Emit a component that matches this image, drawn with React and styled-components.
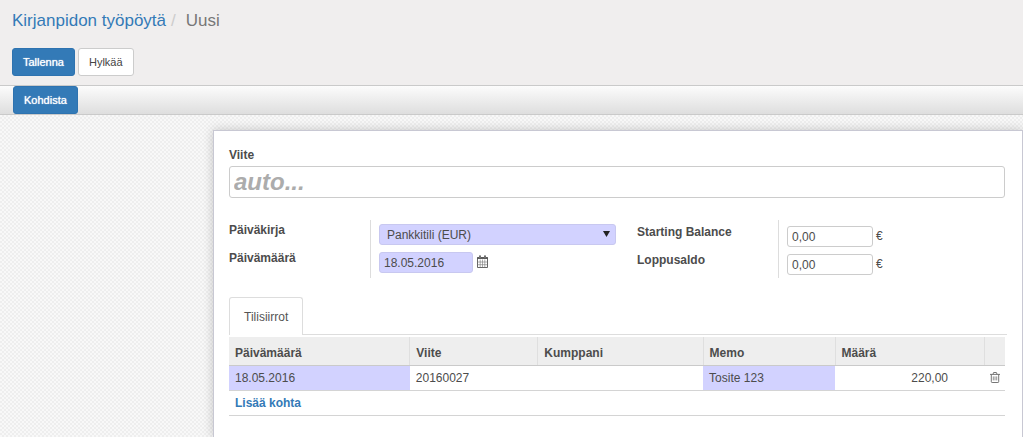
import React from 'react';
import styled, { createGlobalStyle } from 'styled-components';

const GlobalStyle = createGlobalStyle`
* {
    box-sizing: border-box;
}

html, body, #root {
    height: 100%;
}

body {
    margin: 0;
    overflow: hidden;
    font-family: 'Liberation Sans', Arial, sans-serif;
    font-size: 12px;
    line-height: 16px;
    color: #4c4c4c;
}

input, select, button {
    font-family: inherit;
    color: inherit;
}
`;

const Page = styled.div`
min-height: 100%;
display: flex;
flex-direction: column;
`;

const Header = styled.header`
display: flex;
flex-direction: column;
gap: 17px;
padding: 10px 13px 9px 12px;
background: #f0eeee;
border-bottom: 1px solid #cacaca;
`;

const Breadcrumb = styled.nav`
display: flex;
font-size: 17px;
line-height: 21px;
color: #777;
`;

const Crumb = styled.a`
color: #337ab7;
text-decoration: none;
`;

const Slash = styled.span`
padding: 0 10px 0 5px;
color: #ccc;
`;

const Buttons = styled.div`
display: flex;
gap: 3px;
`;

const Button = styled.button`
height: 28px;
padding: 0 10px;
font-size: 11px;
line-height: 16px;
border: 1px solid ${props => props.$primary ? '#2e73b0' : '#ccc'};
border-radius: 3px;
background: ${props => props.$primary ? '#337ab7' : '#fff'};
color: ${props => props.$primary ? '#fff' : '#444'};
text-shadow: ${props => props.$primary ? '0 0 1px #fff' : 'none'};
`;

const StatusBar = styled.div`
display: flex;
padding: 0 13px;
border-bottom: 1px solid #cacaca;
background: linear-gradient(to bottom, #fcfcfc, #dedede);
`;

const Content = styled.main`
flex: 1;
display: flex;
padding: 15px 0 0 213px;
background-color: #f8f8f8;
background-image:
    linear-gradient(45deg, #eee 25%, transparent 25%, transparent 75%, #eee 75%),
    linear-gradient(45deg, #eee 25%, transparent 25%, transparent 75%, #eee 75%);
background-size: 4px 4px;
background-position: 0 0, 2px 2px;
`;

const Sheet = styled.form`
flex: 1;
min-width: 0;
padding: 16px 17px 16px 15px;
border: 1px solid #c8c8d3;
border-bottom: none;
background: #fff;
box-shadow: 0 0 10px rgba(0, 0, 0, 0.2);
`;

const Label = styled.label`
display: block;
font-weight: bold;
`;

const TitleInput = styled.input`
display: block;
width: 100%;
height: 32px;
margin-top: 3px;
padding: 0 4px;
border: 1px solid #ccc;
border-radius: 3px;
font-size: 24px;
font-weight: bold;
font-style: italic;

&::placeholder {
    color: #acacac;
    opacity: 1;
}
`;

const Groups = styled.div`
display: grid;
grid-template-columns: 387fr 368fr;
gap: 21px;
margin-top: 22px;
`;

const Group = styled.div`
display: grid;
grid-template-columns: 141px 1fr;
`;

const Labels = styled.div`
display: flex;
flex-direction: column;
gap: 12px;
padding-top: ${props => props.$top}px;
`;

const Fields = styled.div`
display: flex;
flex-direction: column;
gap: 7px;
min-height: 58px;
padding: ${props => props.$top}px 0 0 8px;
border-left: 1px solid #ddd;
`;

const Field = styled.div`
position: relative;
display: flex;
align-items: center;
gap: 3px;
`;

const Currency = styled.span`
padding-bottom: 2px;
`;

const Input = styled.input`
width: ${props => props.$width}px;
height: 21px;
padding: 1px 4px 0;
font-size: 12px;
border: 1px solid ${props => props.$required ? '#c8c8f0' : '#ccc'};
border-radius: 3px;
background: ${props => props.$required ? '#d2d2ff' : '#fff'};
`;

const Select = styled.select`
appearance: none;
width: 100%;
height: 21px;
padding: 0 7px;
font-size: 12px;
border: 1px solid #c8c8f0;
border-radius: 3px;
background: #d2d2ff;
`;

const Arrow = styled.svg`
position: absolute;
right: 6px;
top: 7px;
pointer-events: none;
`;

const IconButton = styled.button`
display: inline-flex;
padding: 0 0 2px;
border: none;
background: none;
vertical-align: middle;
`;

const Tabs = styled.div`
display: flex;
margin: 19px -2px 2px 0;
border-bottom: 1px solid #ddd;
`;

const Tab = styled.button`
height: 38px;
margin-bottom: -1px;
padding: 0 14px;
font-size: 12px;
color: #555;
background: #fff;
border: 1px solid #ddd;
border-bottom: none;
border-radius: 3px 3px 0 0;
`;

const Table = styled.table`
width: 100%;
table-layout: fixed;
border-collapse: collapse;
`;

const Th = styled.th`
width: ${props => props.$width};
height: 28px;
padding: 4px 6px 0;
text-align: left;
background: #eee;
border-bottom: 1px solid #cacaca;

& + & {
    border-left: 1px solid #dfdfdf;
}
`;

const Td = styled.td`
height: 25px;
padding: ${props => props.$right ? '0 36px 0 6px' : '0 5px 0 6px'};
text-align: ${props => props.$right ? 'right' : 'left'};
background: ${props => props.$required ? '#d2d2ff' : '#fff'};
border-bottom: 1px solid #d4d4d4;
`;

const AddLink = styled.a`
color: #337ab7;
font-weight: bold;
text-decoration: none;
`;

function CalendarIcon() {
    return (
        <svg width='13' height='13' viewBox='0 0 13 13' fill='none' stroke='#555'>
            <path d='M1.5 2.5h10v10h-10z' strokeWidth='.9' />
            <path d='M1 3.2h11' strokeWidth='1.5' />
            <path d='M4.2 4.5v8M6.5 4.5v8M8.8 4.5v8M1.5 7h10M1.5 9.7h10' stroke='#777' strokeWidth='.6' />
            <path d='M4 .6v2.6M9 .6v2.6' strokeWidth='1.9' />
            <path d='M4 1.2v1.8M9 1.2v1.8' stroke='#ccc' strokeWidth='.5' />
        </svg>
    )
}

function TrashIcon() {
    return (
        <svg width='10' height='11' viewBox='0 0 10 11' fill='none' stroke='#666' strokeWidth='.9'>
            <path d='M0 2.4h10M3 2.2l.6-1.7h2.8L7 2.2M1.3 2.5v7.2q0 .8.8.8h5.8q.8 0 .8-.8V2.5' />
            <path d='M3.3 4.4v4M5 4.4v4M6.7 4.4v4' strokeWidth='.7' />
        </svg>
    )
}

const columns = [
    { name: 'Päivämäärä', width: '23.3%' },
    { name: 'Viite', width: '16.5%' },
    { name: 'Kumppani', width: '21.3%' },
    { name: 'Memo', width: '17%' },
    { name: 'Määrä', width: '19.2%' },
    { name: '', width: '2.7%' },
];

export default function App() {
    return (
        <Page>
            <GlobalStyle />
            <Header>
                <Breadcrumb>
                    <Crumb href='#'>Kirjanpidon työpöytä</Crumb>
                    <Slash>/</Slash>
                    <span>Uusi</span>
                </Breadcrumb>
                <Buttons>
                    <Button $primary>Tallenna</Button>
                    <Button>Hylkää</Button>
                </Buttons>
            </Header>
            <StatusBar>
                <Button $primary>Kohdista</Button>
            </StatusBar>
            <Content>
                <Sheet>
                    <Label htmlFor='name'>Viite</Label>
                    <TitleInput id='name' placeholder='auto...' />
                    <Groups>
                        <Group>
                            <Labels $top={2}>
                                <Label htmlFor='journal'>Päiväkirja</Label>
                                <Label htmlFor='date'>Päivämäärä</Label>
                            </Labels>
                            <Fields $top={4}>
                                <Field>
                                    <Select id='journal'>
                                        <option>Pankkitili (EUR)</option>
                                    </Select>
                                    <Arrow width='7' height='6' viewBox='0 0 7 6'>
                                        <path d='M0 0h7L3.5 6z' fill='#222' />
                                    </Arrow>
                                </Field>
                                <Field>
                                    <Input id='date' $width={94} $required defaultValue='18.05.2016' />
                                    <IconButton type='button' aria-label='Päivämäärä'><CalendarIcon /></IconButton>
                                </Field>
                            </Fields>
                        </Group>
                        <Group>
                            <Labels $top={4}>
                                <Label htmlFor='start'>Starting Balance</Label>
                                <Label htmlFor='end'>Loppusaldo</Label>
                            </Labels>
                            <Fields $top={6}>
                                <Field>
                                    <Input id='start' $width={86} defaultValue='0,00' />
                                    <Currency>€</Currency>
                                </Field>
                                <Field>
                                    <Input id='end' $width={86} defaultValue='0,00' />
                                    <Currency>€</Currency>
                                </Field>
                            </Fields>
                        </Group>
                    </Groups>
                    <Tabs>
                        <Tab type='button'>Tilisiirrot</Tab>
                    </Tabs>
                    <Table>
                        <thead>
                            <tr>
                                {columns.map(col => (
                                    <Th key={col.name} $width={col.width}>{col.name}</Th>
                                ))}
                            </tr>
                        </thead>
                        <tbody>
                            <tr>
                                <Td $required>18.05.2016</Td>
                                <Td>20160027</Td>
                                <Td></Td>
                                <Td $required>Tosite 123</Td>
                                <Td $right>220,00</Td>
                                <Td><IconButton type='button' aria-label='Poista'><TrashIcon /></IconButton></Td>
                            </tr>
                            <tr>
                                <Td colSpan={6}><AddLink href='#'>Lisää kohta</AddLink></Td>
                            </tr>
                        </tbody>
                    </Table>
                </Sheet>
            </Content>
        </Page>
    )
}
